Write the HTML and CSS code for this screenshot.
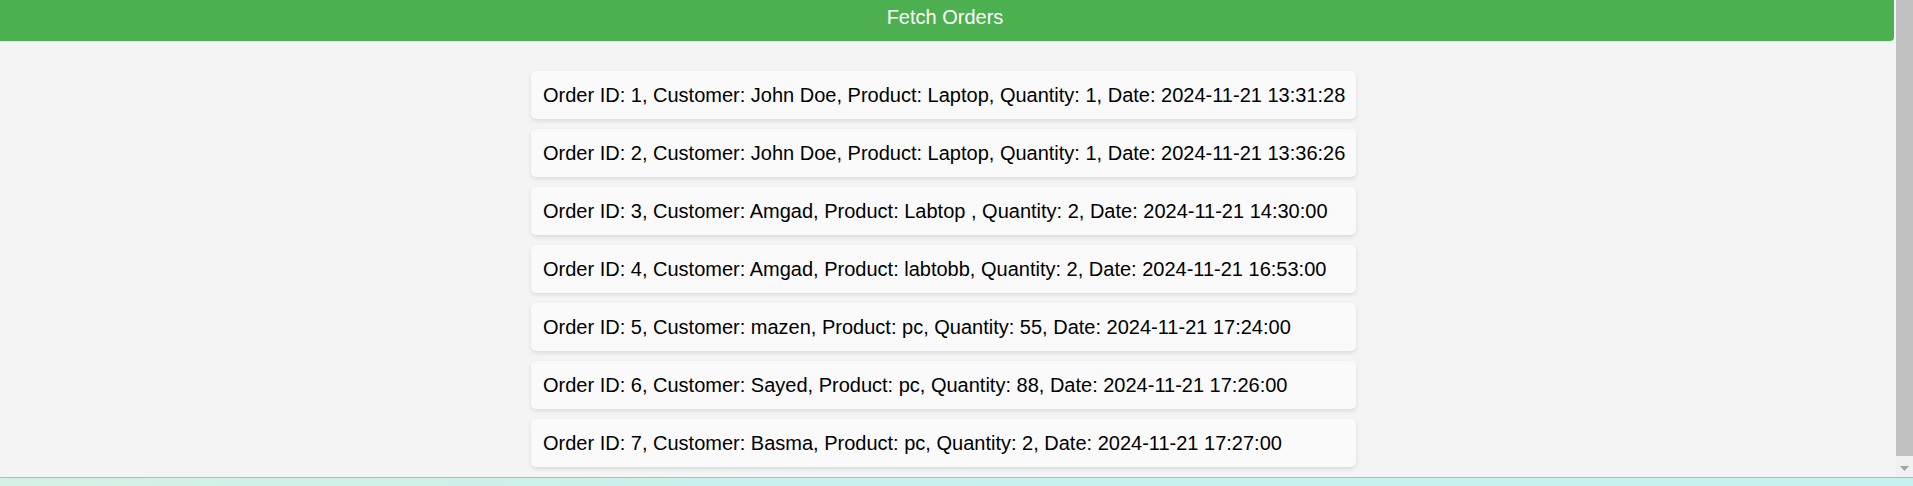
FILE: index.html
```html
<!DOCTYPE html>
<html lang="en">
<head>
<meta charset="utf-8">
<title>Orders</title>
<link rel="stylesheet" href="styles.css">
</head>
<body>
<div class="window">
  <div class="page">
    <div class="content">
      <button class="fetch-btn">Fetch Orders</button>
      <ul class="orders">
        <li class="order">Order ID: 1, Customer: John Doe, Product: Laptop, Quantity: 1, Date: 2024-11-21 13:31:28</li>
        <li class="order">Order ID: 2, Customer: John Doe, Product: Laptop, Quantity: 1, Date: 2024-11-21 13:36:26</li>
        <li class="order">Order ID: 3, Customer: Amgad, Product: Labtop , Quantity: 2, Date: 2024-11-21 14:30:00</li>
        <li class="order">Order ID: 4, Customer: Amgad, Product: labtobb, Quantity: 2, Date: 2024-11-21 16:53:00</li>
        <li class="order">Order ID: 5, Customer: mazen, Product: pc, Quantity: 55, Date: 2024-11-21 17:24:00</li>
        <li class="order">Order ID: 6, Customer: Sayed, Product: pc, Quantity: 88, Date: 2024-11-21 17:26:00</li>
        <li class="order">Order ID: 7, Customer: Basma, Product: pc, Quantity: 2, Date: 2024-11-21 17:27:00</li>
      </ul>
    </div>
  </div>
  <div class="scrollbar">
    <div class="thumb"></div>
    <div class="track-gap"></div>
    <div class="arrow-btn">
      <svg width="9" height="5" viewBox="0 0 9 5"><polygon points="0,0 9,0 4.5,5" fill="#a3a3a3"/></svg>
    </div>
  </div>
</div>
<div class="taskbar"></div>
</body>
</html>
```
FILE: styles.css
```css
html, body {
  margin: 0;
  padding: 0;
}
body {
  height: 486px;
  overflow: hidden;
  display: flex;
  flex-direction: column;
  font-family: "Liberation Sans", Arial, sans-serif;
  background: #f4f4f4;
}
.window {
  height: 477px;
  display: flex;
  background: #f4f4f4;
  flex: none;
}
.page {
  flex: 1;
  min-width: 0;
  overflow: hidden;
}
.content {
  margin: -4px 2px 0 -4px;
}
.fetch-btn {
  display: block;
  width: 100%;
  box-sizing: border-box;
  background: #4caf50;
  color: #ffffff;
  border: none;
  border-radius: 4px;
  font-family: "Liberation Sans", Arial, sans-serif;
  font-size: 20px;
  line-height: 23px;
  padding: 10px 0 12px;
  text-align: center;
  cursor: pointer;
}
.orders {
  list-style: none;
  margin: 30px 0 0 calc(50% - 414px);
  padding: 0;
  width: 825px;
}
.order {
  box-sizing: border-box;
  background: #fafafa;
  color: #000;
  padding: 12px;
  margin-bottom: 10px;
  border-radius: 5px;
  box-shadow: 0 2px 4px rgba(0, 0, 0, 0.1);
  font-size: 20px;
  line-height: 24px;
  white-space: nowrap;
}
.scrollbar {
  width: 17px;
  flex: none;
  background: #f1f1f1;
  display: flex;
  flex-direction: column;
}
.thumb {
  height: 456px;
  background: #c1c1c1;
}
.track-gap {
  height: 3px;
}
.arrow-btn {
  flex: 1;
  display: flex;
  align-items: center;
  justify-content: center;
}
.arrow-btn svg {
  display: block;
}
.taskbar {
  flex: 1;
  border-top: 1px solid #b5b5b5;
  background: linear-gradient(to right, #d5f1e4, #c9f0ee 40%, #c8f0f0);
}
```
